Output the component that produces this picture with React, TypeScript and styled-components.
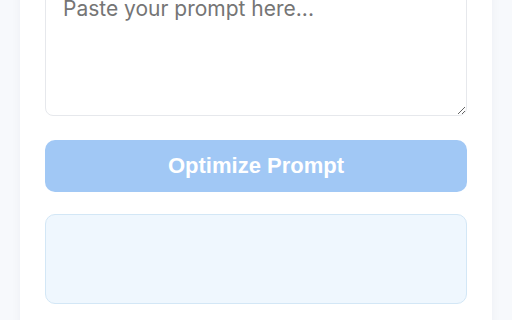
import React from "react";
import styled, { createGlobalStyle } from "styled-components";

const GlobalStyle = createGlobalStyle`
  html, body {
    margin: 0;
    padding: 0;
    background: #f7f9fc;
    font-family: "Liberation Sans", Arial, sans-serif;
  }
  * { box-sizing: border-box; }
`;

const Page = styled.div`
  padding: 0 20px 20px 20px;
`;

const Card = styled.main`
  margin-top: -46px;
  background: #ffffff;
  border-radius: 12px;
  padding: 25px;
  box-shadow: 0 2px 10px rgba(15, 30, 60, 0.05);
  display: flex;
  flex-direction: column;
`;

const PromptInput = styled.textarea`
  display: block;
  width: 100%;
  height: 137px;
  padding: 16px 17px;
  border: 1px solid #e6e8ec;
  border-radius: 8px;
  background: #ffffff;
  font-family: Inter, "Liberation Sans", sans-serif;
  font-size: 21px;
  line-height: 25px;
  color: #222;
  resize: vertical;
  outline: none;
  &::placeholder {
    color: #757575;
  }
`;

const OptimizeButton = styled.button`
  margin-top: 24px;
  height: 52px;
  width: 100%;
  border: none;
  border-radius: 10px;
  background: #a1c8f5;
  color: #ffffff;
  font-family: "Liberation Sans", Arial, sans-serif;
  font-weight: 700;
  font-size: 22px;
  cursor: not-allowed;
`;

const ResultBox = styled.section`
  margin-top: 22px;
  height: 90px;
  border: 1px solid #d3e7f6;
  border-radius: 10px;
  background: #eff7fe;
  margin-bottom: 40px;
`;

export default function App() {
  return (
    <>
      <GlobalStyle />
      <Page>
        <Card>
          <PromptInput placeholder="Paste your prompt here..." />
          <OptimizeButton disabled>Optimize Prompt</OptimizeButton>
          <ResultBox />
        </Card>
      </Page>
    </>
  );
}
